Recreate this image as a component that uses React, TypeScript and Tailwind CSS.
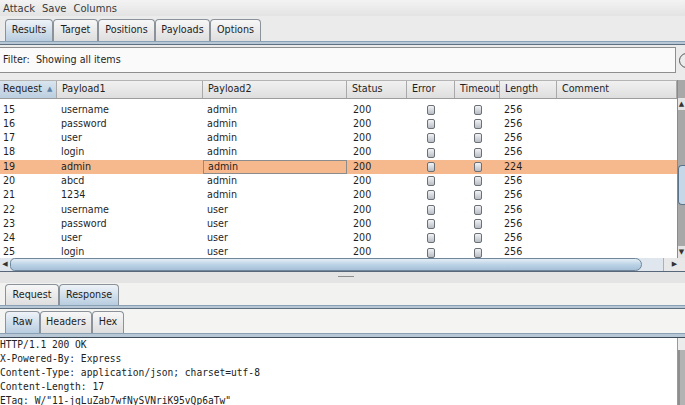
import React from 'react'

const rows = [
  { id: 15, p1: 'username', p2: 'admin', len: 256 },
  { id: 16, p1: 'password', p2: 'admin', len: 256 },
  { id: 17, p1: 'user', p2: 'admin', len: 256 },
  { id: 18, p1: 'login', p2: 'admin', len: 256 },
  { id: 19, p1: 'admin', p2: 'admin', len: 224, selected: true },
  { id: 20, p1: 'abcd', p2: 'admin', len: 256 },
  { id: 21, p1: '1234', p2: 'admin', len: 256 },
  { id: 22, p1: 'username', p2: 'user', len: 256 },
  { id: 23, p1: 'password', p2: 'user', len: 256 },
  { id: 24, p1: 'user', p2: 'user', len: 256 },
  { id: 25, p1: 'login', p2: 'user', len: 256 },
]

const columns = [
  { label: 'Request', w: 'w-[57px]' },
  { label: 'Payload1', w: 'w-[146px]' },
  { label: 'Payload2', w: 'w-[144px]' },
  { label: 'Status', w: 'w-[60px]' },
  { label: 'Error', w: 'w-[48px]' },
  { label: 'Timeout', w: 'w-[45px]' },
  { label: 'Length', w: 'w-[57px]' },
  { label: 'Comment', w: 'w-[120px]' },
]

const responseLines = [
  'HTTP/1.1 200 OK',
  'X-Powered-By: Express',
  'Content-Type: application/json; charset=utf-8',
  'Content-Length: 17',
  'ETag: W/"11-jqLuZab7wfNySVNriK95vQp6aTw"',
]

function Tab({ label, active, width }: { label: string; active?: boolean; width: string }) {
  return (
    <div
      className={
        'flex h-full items-center justify-center rounded-t-[4px] border border-b-0 border-[#8b929a] text-[9.6px] text-[#1e1e1e] ' +
        width +
        (active
          ? ' bg-gradient-to-b from-[#eef3f8] to-[#b8cde0]'
          : ' bg-gradient-to-b from-[#f7f7f7] to-[#dedede]')
      }
    >
      {label}
    </div>
  )
}

function TabLine() {
  return (
    <div className="h-[4px] shrink-0 border-t border-[#8aa0b4] bg-[#b7c7d6] border-b border-b-[#5e6f80]" />
  )
}

function Checkbox() {
  return (
    <div className="h-[10px] w-[8px] rounded-[2px] border border-[#6b7077] bg-gradient-to-b from-[#f2f3f5] to-[#b9bec5]" />
  )
}

function Cell({ w, children, center, className = '' }: { w: string; children?: React.ReactNode; center?: boolean; className?: string }) {
  return (
    <div className={`${w} flex h-full shrink-0 items-center ${center ? 'justify-center' : 'pl-[4px]'} ${className}`}>
      {children}
    </div>
  )
}

export default function App() {
  return (
    <div
      className="flex h-[405px] w-[685px] flex-col overflow-hidden bg-[#ebebeb] text-[#1f1f1f]"
      style={{ fontFamily: '"DejaVu Sans", "Liberation Sans", sans-serif' }}
    >
      {/* menu */}
      <div className="flex h-[16px] shrink-0 items-center gap-[7px] bg-gradient-to-b from-[#f3f3f3] to-[#e3e3e3] pl-[3px] text-[10px] text-[#3a3a3a]">
        <span>Attack</span>
        <span>Save</span>
        <span>Columns</span>
      </div>

      {/* main tabs */}
      <div className="flex h-[25px] shrink-0 items-end pl-[5px]">
        <div className="flex h-[22px]">
          <Tab label="Results" active width="w-[48px]" />
          <Tab label="Target" width="w-[45px]" />
          <Tab label="Positions" width="w-[57px]" />
          <Tab label="Payloads" width="w-[55px]" />
          <Tab label="Options" width="w-[51px]" />
        </div>
      </div>
      <TabLine />

      {/* filter */}
      <div className="mt-[2px] flex h-[26px] shrink-0 items-center">
        <div className="flex h-full w-[676px] shrink-0 items-center border border-l-0 border-[#8e8e8e] bg-[#fafafa] pl-[3px] text-[9.6px]">
          Filter:&nbsp; Showing all items
        </div>
        <div className="ml-[3px] h-[15px] w-[15px] shrink-0 rounded-full border border-[#555]" />
      </div>

      <div className="h-[7px] shrink-0" />

      {/* table */}
      <div className="flex h-[192px] shrink-0 flex-col">
        <div className="flex min-h-0 flex-1">
          <div className="flex w-[677px] shrink-0 flex-col border-t border-[#b4b4b4]">
            {/* header */}
            <div className="flex h-[18px] shrink-0 border-b border-[#9c9c9c] text-[9.6px]">
              {columns.map((c, i) => (
                <div
                  key={c.label}
                  className={`${c.w} flex h-full shrink-0 items-center border-r border-[#a9a9a9] ${
                    i === 0 ? 'bg-gradient-to-b from-[#d9e4ee] to-[#bccfe0] pl-[3px]' : 'bg-gradient-to-b from-[#f1f1f1] to-[#dedede] pl-[5px]'
                  }`}
                >
                  {c.label}
                  {i === 0 && <span className="ml-[5px] text-[7px] text-[#5f82a6]">▲</span>}
                </div>
              ))}
            </div>
            {/* body */}
            <div className="min-h-0 flex-1 overflow-hidden bg-white pt-[3.5px] text-[9.6px]">
              {rows.map((r) => (
                <div
                  key={r.id}
                  className={`flex h-[14.3px] leading-[14.3px] ${r.selected ? 'bg-[#f6b98d]' : ''}`}
                >
                  <Cell w="w-[57px]" className="!pl-[3px]">{r.id}</Cell>
                  <Cell w="w-[146px]">{r.p1}</Cell>
                  <Cell w="w-[144px]" className={r.selected ? 'border border-[#8c8c8c]' : ''}>
                    {r.p2}
                  </Cell>
                  <Cell w="w-[60px]" className="pl-[6px]">200</Cell>
                  <Cell w="w-[48px]" center>
                    <Checkbox />
                  </Cell>
                  <Cell w="w-[45px]" center>
                    <Checkbox />
                  </Cell>
                  <Cell w="w-[57px]">{r.len}</Cell>
                  <Cell w="w-[120px]" />
                </div>
              ))}
            </div>
          </div>
          {/* vertical scrollbar */}
          <div className="flex w-[8px] shrink-0 flex-col border-l border-[#8a8a8a] bg-[#a8a8a8] pt-[18px]">
            <div className="flex h-[12px] items-center justify-center bg-[#e4e4e4] text-[7px] text-[#333]">▲</div>
            <div className="relative flex-1">
              <div className="absolute left-0 right-0 top-[55px] h-[40px] rounded-l-[4px] border border-r-0 border-[#5b738a] bg-[#c6d8e8]" />
            </div>
            <div className="flex h-[12px] items-center justify-center bg-[#e4e4e4] text-[7px] text-[#333]">▼</div>
          </div>
        </div>
        {/* horizontal scrollbar */}
        <div className="flex h-[14px] shrink-0 border-b border-[#58687a] bg-[#dfe6ed]">
          <div className="flex w-[10px] items-center justify-center text-[7px] text-[#333]">◀</div>
          <div className="flex flex-1 items-center pr-[16px]">
            <div className="h-[13px] w-[632px] rounded-l-[10px] rounded-r-[14px] border border-[#6f869b] bg-gradient-to-b from-[#e4eef6] via-[#bcd3e6] to-[#a6c0d8]" />
          </div>
          <div className="flex w-[22px] items-center justify-center border-l border-[#b0b0b0] bg-[#e8e8e8] text-[7px] text-[#333]">▶</div>
        </div>
      </div>

      {/* divider */}
      <div className="flex h-[11px] shrink-0 items-start justify-center bg-[#e4e4e4] pt-[4px]">
        <div className="ml-[6px] h-[1px] w-[16px] bg-[#8d8d8d]" />
      </div>

      {/* request / response tabs */}
      <div className="flex h-[22px] shrink-0 items-end bg-[#f2f2f0] pl-[5px]">
        <div className="flex h-[21px]">
          <Tab label="Request" width="w-[54px]" />
          <Tab label="Response" active width="w-[60px]" />
        </div>
      </div>
      <TabLine />

      <div className="flex h-[24px] shrink-0 items-end bg-[#f4f4f2] pl-[5px]">
        <div className="flex h-[22px]">
          <Tab label="Raw" active width="w-[35px]" />
          <Tab label="Headers" width="w-[52px]" />
          <Tab label="Hex" width="w-[32px]" />
        </div>
      </div>
      <div className="h-[5px] shrink-0 border-t border-[#8aa0b4] bg-[#b7c7d6] border-b border-b-[#3e4c5a]" />

      {/* response body */}
      <div className="flex min-h-0 flex-1">
        <div
          className="w-[677px] shrink-0 bg-white text-[9.6px] leading-[14px] text-[#222]"
          style={{ fontFamily: '"DejaVu Sans Mono", "Liberation Mono", monospace' }}
        >
          {responseLines.map((l) => (
            <div key={l} className="whitespace-pre">
              {l}
            </div>
          ))}
        </div>
        <div className="flex w-[8px] shrink-0 flex-col border-l border-[#9a9a9a] bg-[#e0e0e0]">
          <div className="h-[12px] bg-[#ececec]" />
          <div className="flex-1 border-l-2 border-[#8f8f8f] bg-[#b3b3b3]" />
        </div>
      </div>
    </div>
  )
}
